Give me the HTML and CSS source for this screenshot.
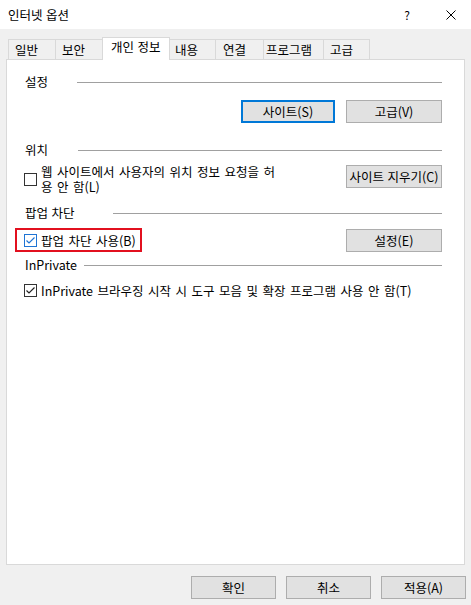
FILE: index.html
```html
<!DOCTYPE html>
<html lang="ko">
<head>
<meta charset="utf-8">
<title>인터넷 옵션</title>
<link rel="stylesheet" href="styles.css">
</head>
<body>
<div class="window">
  <header class="titlebar">
    <span class="title">인터넷 옵션</span>
    <span class="help">?</span>
    <span class="close"><svg width="10" height="10" viewBox="0 0 10 10"><path d="M0.5 0.5L9.5 9.5M9.5 0.5L0.5 9.5" stroke="#000" stroke-width="1" fill="none"/></svg></span>
  </header>

  <nav class="tabs">
    <div class="tab w-general">일반</div>
    <div class="tab w-security">보안</div>
    <div class="tab tab-active w-privacy">개인 정보</div>
    <div class="tab w-content">내용</div>
    <div class="tab w-connect">연결</div>
    <div class="tab w-programs">프로그램</div>
    <div class="tab w-advanced">고급</div>
  </nav>

  <section class="panel">
    <div class="group-head head-settings"><span class="label l-settings">설정</span><span class="rule"></span></div>
    <div class="btn-row row-settings">
      <button class="btn btn-focus w-site">사이트(S)</button>
      <button class="btn w-wide">고급(V)</button>
    </div>

    <div class="group-head head-location"><span class="label l-location">위치</span><span class="rule"></span></div>
    <div class="option-row row-location">
      <label class="check">
        <span class="box"></span>
        <span class="check-text wrap">웹 사이트에서 사용자의 위치 정보 요청을 허용 안 함(L)</span>
      </label>
      <button class="btn w-wide btn-offset">사이트 지우기(C)</button>
    </div>

    <div class="group-head head-popup"><span class="label l-popup">팝업 차단</span><span class="rule"></span></div>
    <div class="option-row row-popup">
      <label class="check highlight">
        <span class="box box-blue"><svg width="11" height="11" viewBox="0 0 11 11"><path d="M1.5 5.5L4 8L9.5 2.5" stroke="#1f74d4" stroke-width="1.2" fill="none"/></svg></span>
        <span class="check-text">팝업 차단 사용(B)</span>
      </label>
      <button class="btn w-wide btn-offset">설정(E)</button>
    </div>

    <div class="group-head head-inprivate"><span class="label l-inprivate">InPrivate</span><span class="rule"></span></div>
    <div class="option-row row-inprivate">
      <label class="check">
        <span class="box"><svg width="11" height="11" viewBox="0 0 11 11"><path d="M1.5 5.5L4 8L9.5 2.5" stroke="#222" stroke-width="1.2" fill="none"/></svg></span>
        <span class="check-text">InPrivate 브라우징 시작 시 도구 모음 및 확장 프로그램 사용 안 함(T)</span>
      </label>
    </div>
  </section>

  <footer class="actions">
    <button class="btn w-action">확인</button>
    <button class="btn w-action">취소</button>
    <button class="btn w-action">적용(A)</button>
  </footer>
</div>
</body>
</html>
```

FILE: styles.css
```css
* { box-sizing: border-box; }

html, body {
  margin: 0;
  padding: 0;
}

body {
  background: #f0f0f0;
  font-family: "Noto Sans CJK KR", "Noto Sans", sans-serif;
  font-size: 12.5px;
  color: #000;
  width: 471px;
  height: 605px;
  overflow: hidden;
}

.titlebar {
  height: 29px;
  background: #fff;
  display: flex;
  align-items: center;
  padding: 0 15px 0 8px;
  line-height: 16px;
}

.title { flex: 1; }

.help {
  margin-right: 36px;
  font-size: 12px;
}

.close {
  display: flex;
  width: 10px;
  height: 10px;
}

.tabs {
  display: flex;
  align-items: flex-end;
  height: 22px;
  margin: 8px 0 0 8px;
}

.tab {
  height: 20px;
  line-height: 19px;
  border: 1px solid #d9d9d9;
  border-bottom: none;
  padding-left: 6px;
  background: #f0f0f0;
  margin-left: -1px;
  white-space: nowrap;
}

.tab:first-child { margin-left: 0; }

.tab-active {
  height: 23px;
  line-height: 18px;
  margin-bottom: -1px;
  background: #fff;
  position: relative;
  z-index: 1;
  padding-left: 8px;
}

.w-general { width: 48px; }
.w-security { width: 48px; }
.w-privacy { width: 68px; }
.w-content { width: 47px; padding-left: 5px; }
.w-connect { width: 49px; padding-left: 7px; }
.w-programs { width: 61px; padding-left: 2px; }
.w-advanced { width: 47px; }

.panel {
  margin-left: 6px;
  width: 459px;
  height: 506px;
  background: #fff;
  border: 1px solid #d9d9d9;
  padding: 0 22px 0 17px;
}

.group-head {
  display: flex;
  align-items: center;
  height: 16px;
  line-height: 16px;
}

.label { flex: none; padding-left: 1px; }
.l-settings { width: 53px; }
.l-location { width: 54px; }
.l-popup { width: 89px; }
.l-inprivate { width: 60px; }

.rule {
  flex: 1;
  height: 1px;
  background: #a0a0a0;
}

.head-settings { margin-top: 14px; }
.head-location { margin-top: 19px; }
.head-popup { margin-top: 11px; }
.head-inprivate { margin-top: 5px; }

.btn-row {
  display: flex;
  justify-content: flex-end;
  gap: 11px;
}

.row-settings { margin-top: 10px; }

.btn {
  font-family: inherit;
  font-size: 12.5px;
  color: #000;
  height: 23px;
  line-height: 19px;
  padding: 0;
  background: #e1e1e1;
  border: 1px solid #adadad;
  border-radius: 0;
  text-align: center;
  white-space: nowrap;
}

.btn-focus {
  border: 2px solid #0078d7;
}

.w-site { width: 94px; }
.w-wide { width: 96px; }
.w-action { width: 85px; }

.option-row {
  display: flex;
  justify-content: space-between;
  align-items: flex-start;
}

.row-location { margin-top: 6px; }
.row-popup { margin-top: 7px; }
.row-inprivate { margin-top: 10px; }

.btn-offset { margin-top: 1px; }

.check {
  display: flex;
  align-items: center;
  gap: 4px;
  line-height: 15px;
}

.check-text { white-space: nowrap; word-spacing: 1px; }
.check-text.wrap {
  white-space: normal;
  word-break: break-all;
  width: 244px;
}

.box {
  flex: none;
  width: 13px;
  height: 13px;
  border: 1px solid #333;
  background: #fff;
  display: flex;
  align-items: center;
  justify-content: center;
}

.box-blue { border-color: #1f74d4; }

.highlight {
  height: 24px;
  border: 2px solid #e2101f;
  margin-left: -9px;
  padding: 0 4px 0 7px;
}

.actions {
  display: flex;
  justify-content: flex-end;
  gap: 10px;
  margin-top: 11px;
  padding-right: 5px;
}
```
